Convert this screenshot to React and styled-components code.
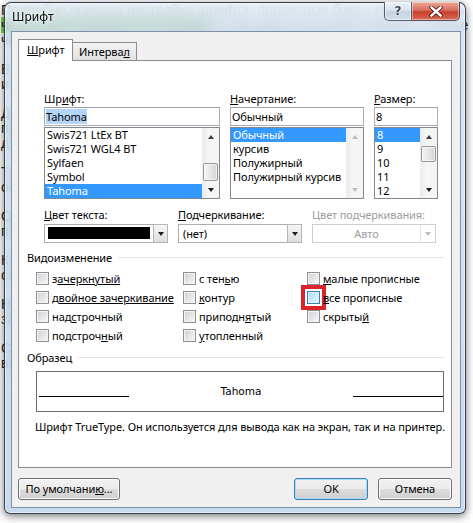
import React from 'react'
import styled, { createGlobalStyle, css } from 'styled-components'

const GlobalStyle = createGlobalStyle`
  html, body {
    margin: 0;
    padding: 0;
  }
  body {
    width: 473px;
    height: 523px;
    overflow: hidden;
    background: #fff;
  }
`

const UI_FONT = `"Noto Sans", "Segoe UI", sans-serif`

/* документ за окном */

const Desk = styled.div`
  position: relative;
  width: 473px;
  height: 523px;
  overflow: hidden;
  background: #fff;
`

const Page = styled.div`
  padding: 3px 1px 0 1px;
  font-family: "Liberation Sans", Arial, sans-serif;
  font-size: 14px;
  line-height: 15px;
  color: #1b1b1b;
`

const DocPara = styled.p`
  margin: 0 0 14px;
`

const Marked = styled.span`
  background: #7dd35a;
`

/* окно */

const Window = styled.div`
  position: absolute;
  left: 4px;
  top: 2px;
  width: 462px;
  height: 512px;
  box-sizing: border-box;
  display: flex;
  flex-direction: column;
  padding: 0 4px 5px 6px;
  border: 1px solid rgba(25, 35, 50, 0.85);
  border-radius: 7px 7px 6px 6px;
  background: linear-gradient(
    180deg,
    rgba(232, 240, 249, 0.8) 0px,
    rgba(208, 224, 241, 0.8) 30px,
    rgba(190, 211, 234, 0.84) 100%
  );
  backdrop-filter: blur(8px);
  box-shadow: inset 0 0 0 1px rgba(255, 255, 255, 0.5), 0 2px 9px rgba(0, 0, 0, 0.55);
  font-family: ${UI_FONT};
  color: #000;
`

const TitleBar = styled.div`
  height: 28px;
  display: flex;
  align-items: flex-start;
`

const Title = styled.div`
  flex: 1;
  padding: 6px 0 0 1px;
  font-size: 12px;
  line-height: 16px;
  text-shadow: 0 0 6px rgba(255, 255, 255, 0.95), 0 0 2px rgba(255, 255, 255, 0.9);
`

const CaptionButtons = styled.div`
  display: flex;
  margin: -1px 1px 0 0;
`

const CaptionButton = styled.div`
  height: 19px;
  display: flex;
  align-items: center;
  justify-content: center;
  box-sizing: border-box;
  border: 1px solid rgba(40, 50, 65, 0.75);
  border-top: none;
  box-shadow: inset 0 0 0 1px rgba(255, 255, 255, 0.45);
  ${p =>
    p.$close
      ? css`
          width: 48px;
          border-left: none;
          border-radius: 0 0 5px 0;
          background: linear-gradient(180deg, #e9a898 0%, #d8705f 45%, #c7402f 55%, #d46a52 100%);
        `
      : css`
          width: 28px;
          border-radius: 0 0 0 5px;
          background: linear-gradient(180deg, #eef2f7 0%, #d9e2ec 45%, #c5d2e0 55%, #d3deea 100%);
        `}
`

const HelpMark = styled.span`
  font-family: "DejaVu Sans", sans-serif;
  font-weight: bold;
  font-size: 12px;
  line-height: 12px;
  color: #3a4656;
  text-shadow: 0 0 2px #fff, 0 0 1px #fff;
`

const Client = styled.div`
  flex: 1;
  display: flex;
  flex-direction: column;
  background: #f0f0f0;
  border: 1px solid #7e91a6;
  padding: 7px 8px 7px 6px;
  font-size: 11px;
  letter-spacing: -0.1px;
  line-height: 15px;
`

/* вкладки */

const TabStrip = styled.div`
  display: flex;
  align-items: flex-end;
  height: 21px;
  position: relative;
  z-index: 1;
`

const Tab = styled.div`
  box-sizing: border-box;
  border: 1px solid #898c95;
  border-bottom: none;
  display: flex;
  align-items: center;
  ${p =>
    p.$active
      ? css`
          height: 22px;
          margin-bottom: -1px;
          padding: 0 0 2px 8px;
          width: 55px;
          background: #fff;
        `
      : css`
          height: 18px;
          width: 64px;
          padding: 0 0 0 6px;
          border-left: none;
          background: linear-gradient(180deg, #f3f3f3, #e1e1e1);
        `}
`

const Panel = styled.div`
  flex: 1;
  box-sizing: border-box;
  display: flex;
  flex-direction: column;
  background: #fff;
  border: 1px solid #898c95;
  padding: 30px 7px 0 8px;
`

const Key = styled.span`
  text-decoration: underline;
  text-underline-offset: 1px;
`

/* поля */

const FieldRow = styled.div`
  display: flex;
  gap: 10px;
  margin: ${p => p.$top || 0}px 0 0 17px;
`

const Field = styled.div`
  display: flex;
  flex-direction: column;
  width: ${p => p.$w}px;
`

const Label = styled.div`
  height: 15px;
  margin-bottom: ${p => p.$mb ?? 1}px;
  white-space: nowrap;
  color: ${p => (p.$disabled ? '#9c9c9c' : '#000')};
`

const TextInput = styled.div`
  height: 19px;
  box-sizing: border-box;
  border: 1px solid #abadb3;
  border-top-color: #9ea1a8;
  background: #fff;
  padding: 0 1px;
  line-height: 17px;
  margin-bottom: 1px;
  white-space: nowrap;
`

const Picked = styled.span`
  background: #b3d5f6;
`

const ListBox = styled.div`
  height: 72px;
  box-sizing: border-box;
  border: 1px solid #828790;
  background: #fff;
  display: flex;
`

const Items = styled.div`
  flex: 1;
  overflow: hidden;
`

const Item = styled.div`
  height: 14px;
  line-height: 14px;
  padding-left: 2px;
  white-space: nowrap;
  ${p =>
    p.$selected &&
    css`
      background: #3399ff;
      color: #fff;
    `}
`

const ScrollBar = styled.div`
  width: 17px;
  display: flex;
  flex-direction: column;
  background: linear-gradient(90deg, #ebebeb, #f6f6f6 40%, #f3f3f3);
`

const ScrollArrow = styled.div`
  height: 17px;
  display: flex;
  align-items: center;
  justify-content: center;
`

const Triangle = styled.span`
  width: 0;
  height: 0;
  border-left: 3.5px solid transparent;
  border-right: 3.5px solid transparent;
  ${p =>
    p.$up
      ? css`border-bottom: 4px solid ${p.$muted ? '#bcbcbc' : '#3f3f3f'};`
      : css`border-top: 4px solid ${p.$muted ? '#bcbcbc' : '#1f1f1f'};`}
`

const Track = styled.div`
  flex: 1;
  padding-top: ${p => p.$offset}px;
`

const Thumb = styled.div`
  height: ${p => p.$h}px;
  box-sizing: border-box;
  margin: 0 1px 0 1px;
  border: 1px solid #979797;
  border-radius: 2px;
  background: linear-gradient(90deg, #f4f4f4, #e6e6e6 50%, #d4d4d4);
  box-shadow: inset 0 0 0 1px rgba(255, 255, 255, 0.6);
`

const Combo = styled.div`
  height: 19px;
  box-sizing: border-box;
  display: flex;
  border: 1px solid ${p => (p.$disabled ? '#cfcfcf' : '#abadb3')};
  background: #fff;
`

const Swatch = styled.div`
  flex: 1;
  margin: 2px 3px 3px 3px;
  background: #000;
`

const ComboText = styled.div`
  flex: 1;
  line-height: 17px;
  padding-left: 4px;
  ${p =>
    p.$disabled &&
    css`
      color: #9c9c9c;
      text-align: center;
      padding-left: 0;
    `}
`

const ComboButton = styled.div`
  width: 15px;
  box-sizing: border-box;
  display: flex;
  align-items: center;
  justify-content: center;
  ${p =>
    p.$disabled
      ? css`
          border-left: 1px solid #e4e4e4;
        `
      : css`
          border: 1px solid #b5b5b5;
          margin: -1px -1px -1px 0;
          background: linear-gradient(180deg, #f6f6f6, #dedede);
        `}
`

/* группы */

const GroupHeader = styled.div`
  display: flex;
  align-items: center;
  height: 15px;
  margin-top: ${p => p.$top}px;
  white-space: nowrap;

  &::after {
    content: '';
    flex: 1;
    margin-left: 6px;
    border-top: 1px solid #dde3e9;
  }
`

const CheckGrid = styled.div`
  display: grid;
  grid-template-columns: 147px 124px 1fr;
  grid-template-rows: repeat(4, 19px);
  grid-auto-flow: column;
  margin: 4px 0 0 9px;
`

const CheckItem = styled.div`
  display: flex;
  align-items: center;
  gap: 3px;
  white-space: nowrap;
`

const Box = styled.span`
  width: 13px;
  height: 13px;
  box-sizing: border-box;
  flex: none;
  border: 1px solid #8e8f8f;
  box-shadow: inset 0 0 0 1px #f4f4f4;
  background: linear-gradient(135deg, #cdd1d7, #f7f7f7);
  ${p =>
    p.$hot &&
    css`
      border-color: #3c7fb1;
      box-shadow: inset 0 0 0 1px #def0fc;
      background: linear-gradient(135deg, #a9d9f8, #e8f6fe);
      outline: 4px solid #dc242b;
      outline-offset: 2px;
    `}
`

const SampleBox = styled.div`
  height: 41px;
  box-sizing: border-box;
  margin: 6px 0 0 9px;
  border: 1px solid #6f6f6f;
  display: flex;
  align-items: center;
  padding: 0 0 0 2px;
`

const Rule = styled.span`
  width: 90px;
  height: 1px;
  margin-top: 10px;
  background: #000;
`

const SampleText = styled.span`
  flex: 1;
  text-align: center;
  font-family: "DejaVu Sans", Tahoma, sans-serif;
  font-size: 10.5px;
  letter-spacing: 0;
`

const Note = styled.div`
  margin: 7px 0 0 8px;
  white-space: nowrap;
`

/* кнопки */

const ButtonRow = styled.div`
  display: flex;
  margin-top: 10px;
  gap: 10px;
`

const Button = styled.div`
  width: ${p => p.$w}px;
  height: 22px;
  box-sizing: border-box;
  display: flex;
  align-items: center;
  justify-content: center;
  border: 1px solid ${p => (p.$default ? '#3c7fb1' : '#707070')};
  border-radius: 3px;
  background: linear-gradient(180deg, #f2f2f2 0%, #ebebeb 50%, #dddddd 51%, #cfcfcf 100%);
  box-shadow: inset 0 0 0 1px ${p => (p.$default ? '#a8dcf6' : '#fbfbfb')};
  padding-bottom: 1px;
  margin-left: ${p => (p.$push ? 'auto' : '0')};
`

/* данные */

const fonts = ['Swis721 LtEx BT', 'Swis721 WGL4 BT', 'Sylfaen', 'Symbol', 'Tahoma']
const styles = ['Обычный', 'курсив', 'Полужирный', 'Полужирный курсив']
const sizes = ['8', '9', '10', '11', '12']

const effects = [
  ['з', 'ачеркнутый'],
  ['д', 'войное зачеркивание'],
  ['над', 'с', 'трочный'],
  ['подстроч', 'н', 'ый'],
  ['с тен', 'ь', 'ю'],
  ['', 'к', 'онтур'],
  ['приподн', 'я', 'тый'],
  ['', 'у', 'топленный'],
  ['', 'м', 'алые прописные'],
  ['', 'в', 'се прописные', true],
  ['скрыты', 'й', ''],
]

const docParas = [
  'В окне выберите нужные параметры и нажмите кнопку ОК, после чего изменения будут применены к выделенному тексту документа.',
  'Для того чтобы все буквы стали прописными, отметьте флажок «все прописные» в разделе видоизменение. Он используется вместе с другими параметрами начертания и размера.',
  'Также доступны малые прописные, скрытый текст и другие варианты оформления для заголовков и подписей.',
  'Образец внизу окна показывает, как будет выглядеть текст после применения выбранных параметров к документу.',
  'Кнопка «По умолчанию» сохраняет настройки для новых документов, созданных на основе текущего шаблона.',
  'Нажмите ОК, чтобы закрыть окно и вернуться к документу. Отмена закрывает окно без изменений в тексте.',
  'Сочетание клавиш позволяет быстро переключать регистр выделенного текста без открытия диалогового окна.',
]

function CloseGlyph() {
  return (
    <svg width="14" height="11" viewBox="0 0 14 11">
      <path d="M2.5 1.5 L11.5 9.5 M11.5 1.5 L2.5 9.5" stroke="#5a1a12" strokeWidth="4.2" strokeLinecap="square" />
      <path d="M2.5 1.5 L11.5 9.5 M11.5 1.5 L2.5 9.5" stroke="#fff" strokeWidth="2.4" strokeLinecap="square" />
    </svg>
  )
}

function Scroll({ offset, thumb, muted }) {
  return (
    <ScrollBar>
      <ScrollArrow>
        <Triangle $up $muted={muted} />
      </ScrollArrow>
      <Track $offset={offset}>{thumb ? <Thumb $h={thumb} /> : null}</Track>
      <ScrollArrow>
        <Triangle $muted={muted} />
      </ScrollArrow>
    </ScrollBar>
  )
}

function List({ items, selected, offset, thumb, muted }) {
  return (
    <ListBox>
      <Items>
        {items.map((it, i) => (
          <Item key={it} $selected={i === selected}>
            {it}
          </Item>
        ))}
      </Items>
      <Scroll offset={offset} thumb={thumb} muted={muted} />
    </ListBox>
  )
}

export default function App() {
  return (
    <>
      <GlobalStyle />
      <Desk>
        <Page>
          <DocPara>
            Подробно описана настройка шрифта: прописные буквы можно задать{' '}
            <Marked>через окно «Шрифт» на вкладке</Marked> с помощью сочетания клавиш, а также через
            контекстное меню у выделенного фрагмента.
          </DocPara>
          {docParas.map(text => (
            <DocPara key={text}>{text}</DocPara>
          ))}
        </Page>

        <Window>
          <TitleBar>
            <Title>Шрифт</Title>
            <CaptionButtons>
              <CaptionButton>
                <HelpMark>?</HelpMark>
              </CaptionButton>
              <CaptionButton $close>
                <CloseGlyph />
              </CaptionButton>
            </CaptionButtons>
          </TitleBar>

          <Client>
            <TabStrip>
              <Tab $active>
                <span>
                  <Key>Ш</Key>рифт
                </span>
              </Tab>
              <Tab>
                <span>
                  Интерва<Key>л</Key>
                </span>
              </Tab>
            </TabStrip>

            <Panel>
              <FieldRow>
                <Field $w={176}>
                  <Label>
                    Шр<Key>и</Key>фт:
                  </Label>
                  <TextInput>
                    <Picked>Tahoma</Picked>
                  </TextInput>
                  <List items={fonts} selected={4} offset={18} thumb={18} />
                </Field>
                <Field $w={134}>
                  <Label>
                    <Key>Н</Key>ачертание:
                  </Label>
                  <TextInput>Обычный</TextInput>
                  <List items={styles} selected={0} muted />
                </Field>
                <Field $w={64}>
                  <Label>
                    <Key>Р</Key>азмер:
                  </Label>
                  <TextInput>8</TextInput>
                  <List items={sizes} selected={0} offset={1} thumb={16} />
                </Field>
              </FieldRow>

              <FieldRow $top={8}>
                <Field $w={124}>
                  <Label $mb={2}>
                    <Key>Ц</Key>вет текста:
                  </Label>
                  <Combo>
                    <Swatch />
                    <ComboButton>
                      <Triangle />
                    </ComboButton>
                  </Combo>
                </Field>
                <Field $w={124}>
                  <Label $mb={2}>
                    <Key>П</Key>одчеркивание:
                  </Label>
                  <Combo>
                    <ComboText>(нет)</ComboText>
                    <ComboButton>
                      <Triangle />
                    </ComboButton>
                  </Combo>
                </Field>
                <Field $w={124}>
                  <Label $mb={2} $disabled>
                    Цвет подчеркивания:
                  </Label>
                  <Combo $disabled>
                    <ComboText $disabled>Авто</ComboText>
                    <ComboButton $disabled>
                      <Triangle $muted />
                    </ComboButton>
                  </Combo>
                </Field>
              </FieldRow>

              <GroupHeader $top={7}>Видоизменение</GroupHeader>
              <CheckGrid>
                {effects.map(([before, key, after, hot]) => (
                  <CheckItem key={before + key + after}>
                    <Box $hot={hot} />
                    <span>
                      {before}
                      <Key>{key}</Key>
                      {after}
                    </span>
                  </CheckItem>
                ))}
              </CheckGrid>

              <GroupHeader $top={5}>Образец</GroupHeader>
              <SampleBox>
                <Rule />
                <SampleText>Tahoma</SampleText>
                <Rule />
              </SampleBox>
              <Note>Шрифт TrueType. Он используется для вывода как на экран, так и на принтер.</Note>
            </Panel>

            <ButtonRow>
              <Button $w={102}>
                <span>
                  По умолчани<Key>ю</Key>...
                </span>
              </Button>
              <Button $w={74} $default $push>
                OK
              </Button>
              <Button $w={74}>Отмена</Button>
            </ButtonRow>
          </Client>
        </Window>
      </Desk>
    </>
  )
}
